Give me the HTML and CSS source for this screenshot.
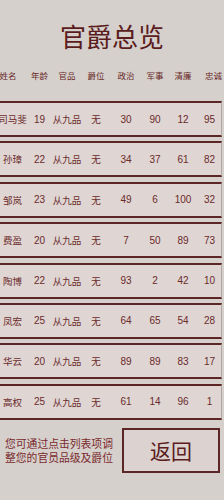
FILE: index.html
```html
<!DOCTYPE html>
<html lang="zh">
<head>
<meta charset="utf-8">
<link rel="stylesheet" href="styles.css">
</head>
<body>
<div class="page">
  <h1 class="title">官爵总览</h1>
  <div class="grid header">
    <span>姓名</span><span>年龄</span><span>官品</span><span>爵位</span><span>政治</span><span>军事</span><span>清廉</span><span>忠诚</span>
  </div>
  <div class="list">
    <div class="grid row"><span>司马斐</span><span>19</span><span>从九品</span><span>无</span><span>30</span><span>90</span><span>12</span><span>95</span></div>
    <div class="grid row"><span>孙璋</span><span>22</span><span>从九品</span><span>无</span><span>34</span><span>37</span><span>61</span><span>82</span></div>
    <div class="grid row"><span>邹岚</span><span>23</span><span>从九品</span><span>无</span><span>49</span><span>6</span><span>100</span><span>32</span></div>
    <div class="grid row"><span>费盈</span><span>20</span><span>从九品</span><span>无</span><span>7</span><span>50</span><span>89</span><span>73</span></div>
    <div class="grid row"><span>陶博</span><span>22</span><span>从九品</span><span>无</span><span>93</span><span>2</span><span>42</span><span>10</span></div>
    <div class="grid row"><span>凤宏</span><span>25</span><span>从九品</span><span>无</span><span>64</span><span>65</span><span>54</span><span>28</span></div>
    <div class="grid row"><span>华云</span><span>20</span><span>从九品</span><span>无</span><span>89</span><span>89</span><span>83</span><span>17</span></div>
    <div class="grid row"><span>高权</span><span>25</span><span>从九品</span><span>无</span><span>61</span><span>14</span><span>96</span><span>1</span></div>
  </div>
  <div class="footer">
    <p class="hint">您可通过点击列表项调<br>整您的官员品级及爵位</p>
    <button class="back">返回</button>
  </div>
</div>
</body>
</html>
```
FILE: styles.css
```css
html, body {
  margin: 0;
  padding: 0;
  background: #d5d0cc;
  overflow: hidden;
}
.page {
  width: 224px;
  height: 500px;
  overflow: hidden;
  font-family: "Liberation Sans", "Noto Sans CJK SC", sans-serif;
  color: #6a2a2a;
}
.title {
  margin: 0;
  padding-top: 18px;
  height: 36px;
  text-align: center;
  font-family: "Noto Sans CJK SC", sans-serif;
  font-size: 26px;
  line-height: 36px;
  font-weight: 400;
  color: #5a1c1c;
}
.grid {
  display: grid;
  grid-template-columns: 30px 27px 28px 30px 30px 28px 28px 25px;
  margin-left: -4px;
  width: 226px;
  align-items: center;
  justify-items: center;
  white-space: nowrap;
}
.header {
  margin-top: 13px;
  height: 16px;
  font-family: "Noto Sans CJK SC", sans-serif;
  font-size: 8.5px;
  color: #6a2a2a;
}
.header span:first-child { margin-left: -6px; }
.header span:last-child { margin-left: 8px; }
.list {
  margin-top: 18px;
  display: flex;
  flex-direction: column;
  gap: 4.4px;
}
.row {
  box-sizing: border-box;
  height: 36px;
  background: #dfd5d3;
  border-top: 2px solid #5c2626;
  border-bottom: 2px solid #5c2626;
  border-right: 1px solid #b3a6a4;
  font-size: 10px;
  color: #6a2a2a;
}
.row span:first-child,
.row span:nth-child(3),
.row span:nth-child(4) {
  font-family: "Noto Sans CJK SC", sans-serif;
  font-size: 9.5px;
}
.row span:first-child { margin-left: 3px; }
.footer {
  display: flex;
  align-items: center;
  margin-top: 8px;
  padding-left: 5px;
  gap: 9px;
}
.hint {
  margin: 0;
  width: 108px;
  font-family: "Noto Sans CJK SC", sans-serif;
  font-size: 10.8px;
  line-height: 14px;
  color: #7a2a2c;
  white-space: nowrap;
}
.back {
  box-sizing: border-box;
  width: 98px;
  height: 45px;
  border: 2px solid #5c2626;
  background: #dcd2d0;
  font-family: "Noto Sans CJK SC", sans-serif;
  font-size: 21px;
  color: #5a1c1c;
  padding: 0;
}
```
